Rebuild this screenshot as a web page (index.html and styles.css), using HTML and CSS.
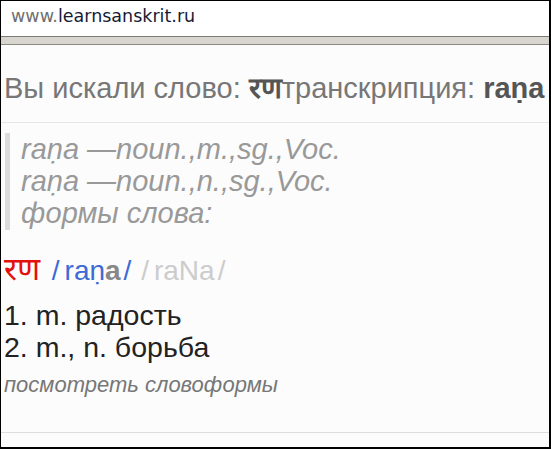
FILE: index.html
```html
<!DOCTYPE html>
<html>
<head>
<meta charset="utf-8">
<link rel="stylesheet" href="styles.css">
</head>
<body>
<div class="frame">
  <div class="topbar"><span class="www">www.</span>learnsanskrit.ru</div>
  <div class="band"></div>
  <div class="content">
    <h1 class="title">Вы искали слово: <b class="dev">रण</b>транскрипция: <b>raṇa</b></h1>
    <blockquote class="forms">
      <div>raṇa —noun.,m.,sg.,Voc.</div>
      <div>raṇa —noun.,n.,sg.,Voc.</div>
      <div>формы слова:</div>
    </blockquote>
    <div class="word"><span class="deva">रण</span> <span class="iast"><span class="sl-open">/</span>raṇ<b>a</b><span class="sl-close">/</span></span> <span class="hk"><span class="sl-open">/</span>raNa<span class="sl-close">/</span></span></div>
    <div class="mean first">1. m. радость</div>
    <div class="mean">2. m., n. борьба</div>
    <div class="more">посмотреть словоформы</div>
    <div class="rule"></div>
  </div>
</div>
</body>
</html>
```

FILE: styles.css
```css
html, body {
  margin: 0;
  padding: 0;
  background: #fff;
}
.frame {
  width: 551px;
  height: 449px;
  box-sizing: border-box;
  border-top: 1px solid #000;
  border-left: 1px solid #000;
  border-right: 2px solid #000;
  border-bottom: 2px solid #000;
  overflow: hidden;
  display: flex;
  flex-direction: column;
}
.topbar {
  height: 35px;
  box-sizing: border-box;
  padding: 5px 0 0 10px;
  font-family: "DejaVu Sans", Verdana, sans-serif;
  font-size: 17.5px;
  line-height: 20px;
  color: #161a35;
  background: #fff;
  flex: none;
}
.www { color: #707070; }
.band {
  flex: none;
  height: 7px;
  background: #d8d5cf;
  border-top: 1px solid #7d7d75;
  border-bottom: 1px solid #8a8a82;
}
.content {
  flex: 1;
  background: #fcfcfc;
  font-family: "Liberation Sans", Arial, sans-serif;
  padding-left: 3px;
  display: flex;
  flex-direction: column;
}
.title {
  margin: 0 0 0 -3px;
  padding: 27px 0 18px 3px;
  font-size: 29px;
  line-height: 32px;
  font-weight: normal;
  color: #777;
  white-space: nowrap;
  border-bottom: 1px solid #e6e6e6;
}
.title b { color: #555; font-weight: bold; }
.forms {
  margin: 10px 0 0 1px;
  padding: 0 0 1px 11px;
  border-left: 5px solid #dcdcdc;
  font-style: italic;
  font-size: 29px;
  line-height: 32px;
  color: #999;
}
.word {
  margin-top: 23px;
  height: 32px;
  font-size: 28px;
  line-height: 32px;
  white-space: nowrap;
}
.deva { color: #e31010; font-size: 32px; }
.iast { color: #3c6ad6; margin-left: 4px; }
.iast b { color: #888; }
.hk { color: #ccc; margin-left: 2px; }
.sl-open { margin-right: 5px; }
.sl-close { margin-left: 3px; }
.mean {
  font-size: 28.5px;
  line-height: 32px;
  color: #222;
}
.mean.first { margin-top: 14px; }
.more {
  margin-top: 9px;
  font-style: italic;
  font-size: 22px;
  line-height: 26px;
  color: #777;
}
.rule {
  margin-top: 34px;
  margin-left: -3px;
  border-top: 1px solid #ddd;
}
```
